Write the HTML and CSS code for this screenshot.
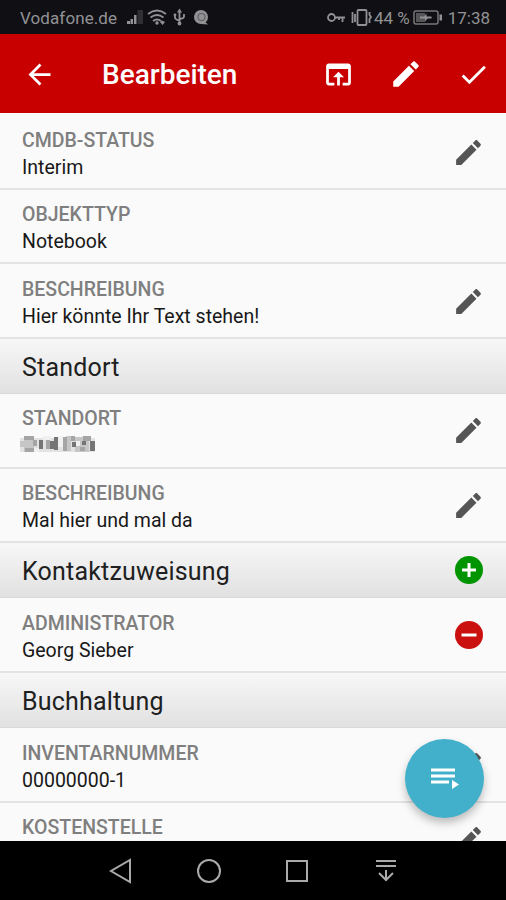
FILE: index.html
```html
<!DOCTYPE html>
<html lang="de">
<head>
<meta charset="utf-8">
<title>Bearbeiten</title>
<link rel="stylesheet" href="styles.css">
</head>
<body>
<svg width="0" height="0" class="defs">
  <symbol id="pencil" viewBox="0 0 24 24"><path d="M3 17.25V21h3.75L17.81 9.94l-3.75-3.75L3 17.25zM20.71 7.04c.39-.39.39-1.02 0-1.41l-2.34-2.34c-.39-.39-1.02-.39-1.41 0l-1.83 1.83 3.75 3.75 1.83-1.83z"/></symbol>
</svg>
<div class="screen">
  <div class="status">
    <span class="carrier">Vodafone.de</span>
    <svg class="st-left" width="86" height="20" viewBox="0 0 86 20">
      <path d="M1 16v-3h3v3zM4.500 16v-5h2.500v5zM8 16V7h2.500v9z"/><path class="dim" d="M11.500 16V2H17v14z"/>
      <g class="line"><path d="M22 6q9-7 18 0M24.500 9.500q6.500-5 13 0M27 13q4-3 8 0"/></g><circle cx="31" cy="15" r="1.700"/><path d="M34 14l2-1.500 3 1.500-2.500 3z"/>
      <g class="line"><path d="M53.500 3v12M49 7v2.500q0 2 4.500 3M58 6v2.500q0 2-4.500 2.500"/></g><path d="M51 4.500l2.500-4 2.500 4z"/><circle cx="53.500" cy="15.500" r="1.900"/><circle cx="49" cy="7" r="1.400"/>
      <circle cx="75" cy="9" r="7"/><path d="M77 12l5 4.500-7-.5z"/><circle class="hole" cx="75.500" cy="9" r="3.500"/>
    </svg>
    <svg class="st-right" width="48" height="20" viewBox="0 0 48 20">
      <g class="line"><circle cx="5.500" cy="9.500" r="3.500"/><path d="M9 9.500h10M16.500 10v4M13 10v2"/><rect x="31.500" y="2" width="9" height="15" rx="1"/><path d="M26.500 4v11M29 6v8M43.500 4v3l1.500 2-1.500 2v4"/></g>
    </svg>
    <span class="percent">44 %</span>
    <svg class="battery" width="30" height="18" viewBox="0 0 30 18"><rect class="shell" x="1" y="2" width="24" height="13" rx="2"/><rect class="charge" x="3" y="4" width="9" height="9"/><path d="M7 7.500h4l2.500-3v3h5v2h-4l-2.500 3v-3H7zM26.500 5.500H29v6h-2.500z"/></svg>
    <span class="clock">17:38</span>
  </div>
  <div class="appbar">
    <svg class="back" width="33" height="33" viewBox="0 0 24 24"><path d="M20 11H7.830l5.590-5.590L12 4l-8 8 8 8 1.410-1.410L7.830 13H20v-2z"/></svg>
    <h1>Bearbeiten</h1>
    <div class="actions">
      <svg width="33" height="33" viewBox="0 0 24 24"><path d="M19 4H5c-1.110 0-2 .9-2 2v12c0 1.100.89 2 2 2h4v-2H5V8h14v10h-4v2h4c1.100 0 2-.9 2-2V6c0-1.100-.89-2-2-2zm-7 6l-4 4h3v6h2v-6h3l-4-4z"/></svg>
      <svg width="34" height="34"><use href="#pencil"/></svg>
      <svg width="33" height="33" viewBox="0 0 24 24"><path d="M9 16.170L4.830 12l-1.420 1.410L9 19 21 7l-1.410-1.410z"/></svg>
    </div>
  </div>
  <div class="list">
    <div class="row"><div class="field"><div class="label">CMDB-STATUS</div><div class="value">Interim</div></div><svg class="edit"><use href="#pencil"/></svg></div>
    <div class="row"><div class="field"><div class="label">OBJEKTTYP</div><div class="value">Notebook</div></div></div>
    <div class="row"><div class="field"><div class="label">BESCHREIBUNG</div><div class="value">Hier könnte Ihr Text stehen!</div></div><svg class="edit"><use href="#pencil"/></svg></div>
    <div class="section"><h2>Standort</h2></div>
    <div class="row"><div class="field"><div class="label">STANDORT</div>
      <svg class="mosaic" width="78" height="24" viewBox="0 0 78 24">
        <path fill="#e2e2e2" d="M0 5h75v14H0z"/>
        <path fill="#c6c6c6" d="M0 8h5v6H0zM4 3h10v16H4zM55 4h14v15H55zM46 3h5v15h-5z"/>
        <path fill="#a5a5a5" d="M4 3h10v4H4zM5 15h9v4H5zM13 7h4v6h-4zM26 7h4v9h-4zM43 4h4v14h-4zM51 3h4v5h-4zM63 3h8v5h-8zM60 14h5v4h-5z"/>
        <path fill="#757575" d="M19 7h4v9h-4zM30 8h4v8h-4zM34 4h4v13h-4zM52 9h4v5h-4zM62 8h4v4h-4zM70 8h5v10h-5z"/>
        <path fill="#f0f0f0" d="M38 3h5v11h-5zM56 8h4v5h-4zM23 3h8v4h-8zM14 15h5v4h-5z"/>
      </svg></div><svg class="edit"><use href="#pencil"/></svg></div>
    <div class="row"><div class="field"><div class="label">BESCHREIBUNG</div><div class="value">Mal hier und mal da</div></div><svg class="edit"><use href="#pencil"/></svg></div>
    <div class="section"><h2>Kontaktzuweisung</h2><svg class="round add" viewBox="0 0 28 28"><circle cx="14" cy="14" r="14"/><path d="M14 7v14M7 14h14"/></svg></div>
    <div class="row"><div class="field"><div class="label">ADMINISTRATOR</div><div class="value">Georg Sieber</div></div><svg class="round remove" viewBox="0 0 28 28"><circle cx="14" cy="14" r="14"/><path d="M6.500 14h15"/></svg></div>
    <div class="section"><h2>Buchhaltung</h2></div>
    <div class="row"><div class="field"><div class="label">INVENTARNUMMER</div><div class="value">00000000-1</div></div><svg class="edit"><use href="#pencil"/></svg></div>
    <div class="row"><div class="field"><div class="label">KOSTENSTELLE</div><div class="value">&nbsp;</div></div><svg class="edit"><use href="#pencil"/></svg></div>
    <div class="fab"><svg width="80" height="80" viewBox="0 0 80 80"><path d="M26 29.500h24v3H26zM26 35.500h24v3H26zM26 41.500h18v3H26zM47 41l7 4.500-7 4.500z"/></svg></div>
  </div>
  <div class="nav">
    <svg width="30" height="30" viewBox="0 0 30 30"><path d="M25 4v22L6 15z"/></svg>
    <svg width="30" height="30" viewBox="0 0 30 30"><circle cx="15" cy="15" r="11"/></svg>
    <svg width="30" height="30" viewBox="0 0 30 30"><path d="M5 5h20v20H5z"/></svg>
    <svg width="30" height="30" viewBox="0 0 30 30"><path d="M5 5h20M5 10h20M15 14v10M8 17l7 7 7-7"/></svg>
  </div>
</div>
</body>
</html>
```
FILE: styles.css
```css
* { box-sizing: border-box; }
body { margin: 0; font-family: Roboto, "Liberation Sans", sans-serif; }
svg { display: block; flex: none; }
.defs { position: absolute; }
h1, h2 { margin: 0; }
.screen { width: 506px; height: 900px; display: flex; flex-direction: column; overflow: hidden; background: #fafafa; }

.status { height: 34px; flex: none; display: flex; align-items: center; padding: 1px 16px 0 20px; background: #101014; color: #929294; fill: #929294; font-size: 17px; line-height: 20px; white-space: nowrap; }
.carrier { width: 97px; letter-spacing: .1px; }
.st-left { margin-left: 9px; }
.st-right { margin-left: auto; }
.battery { margin-left: 3px; }
.clock { margin-left: 5px; }
.line { fill: none; stroke: #929294; stroke-width: 1.800; }
.dim { fill: #303034; }
.hole { fill: none; stroke: #606064; stroke-width: 1.200; }
.shell { fill: none; stroke: #777779; stroke-width: 1.500; }
.charge { fill: #555558; }

.appbar { height: 79px; flex: none; display: flex; align-items: center; padding: 1px 16px 0 23px; background: #c80000; color: #fff; fill: #fff; }
.appbar h1 { margin-left: 46px; padding-top: 2px; font-size: 28px; line-height: 34px; font-weight: 500; }
.actions { margin-left: auto; display: flex; align-items: center; gap: 34px; }

.list { flex: 1; min-height: 0; position: relative; padding-top: 2px; overflow: hidden; }
.row { height: 74.600px; display: flex; justify-content: space-between; padding: 0 21px 0 22px; border-bottom: 2px solid #e3e3e3; }
.field { padding-top: 12.500px; }
.label { font-size: 19.500px; line-height: 26px; color: #7f7f7f; font-weight: 500; }
.value { font-size: 19.500px; line-height: 27px; color: #181818; }
.mosaic { margin: 1px 0 0 -2px; filter: blur(.7px); }
.edit { width: 33px; height: 33px; margin-top: 20.500px; fill: #555; }
.section { height: 55.200px; display: flex; align-items: center; justify-content: space-between; padding: 0 23px 0 22px; background: linear-gradient(#f7f7f7, #e1e1e1); border-bottom: 1px solid #d9d9d9; }
.section h2 { padding-top: 4px; font-size: 25px; line-height: 32px; font-weight: 400; color: #202020; letter-spacing: .2px; }
.round { width: 28px; height: 28px; }
.round path { stroke: #fff; stroke-width: 3; }
.add { fill: #009500; }
.remove { fill: #cb1010; margin: 23px 2px 0 0; }
.fab { position: absolute; left: 405px; top: 626px; width: 79px; height: 79px; border-radius: 50%; background: #42b0cb; fill: #fff; box-shadow: 0 5px 8px rgba(0,0,0,.25); }

.nav { height: 59px; flex: none; display: flex; align-items: center; gap: 58.500px; padding-left: 105px; background: #000; fill: none; stroke: #aaa; stroke-width: 2; }
```
